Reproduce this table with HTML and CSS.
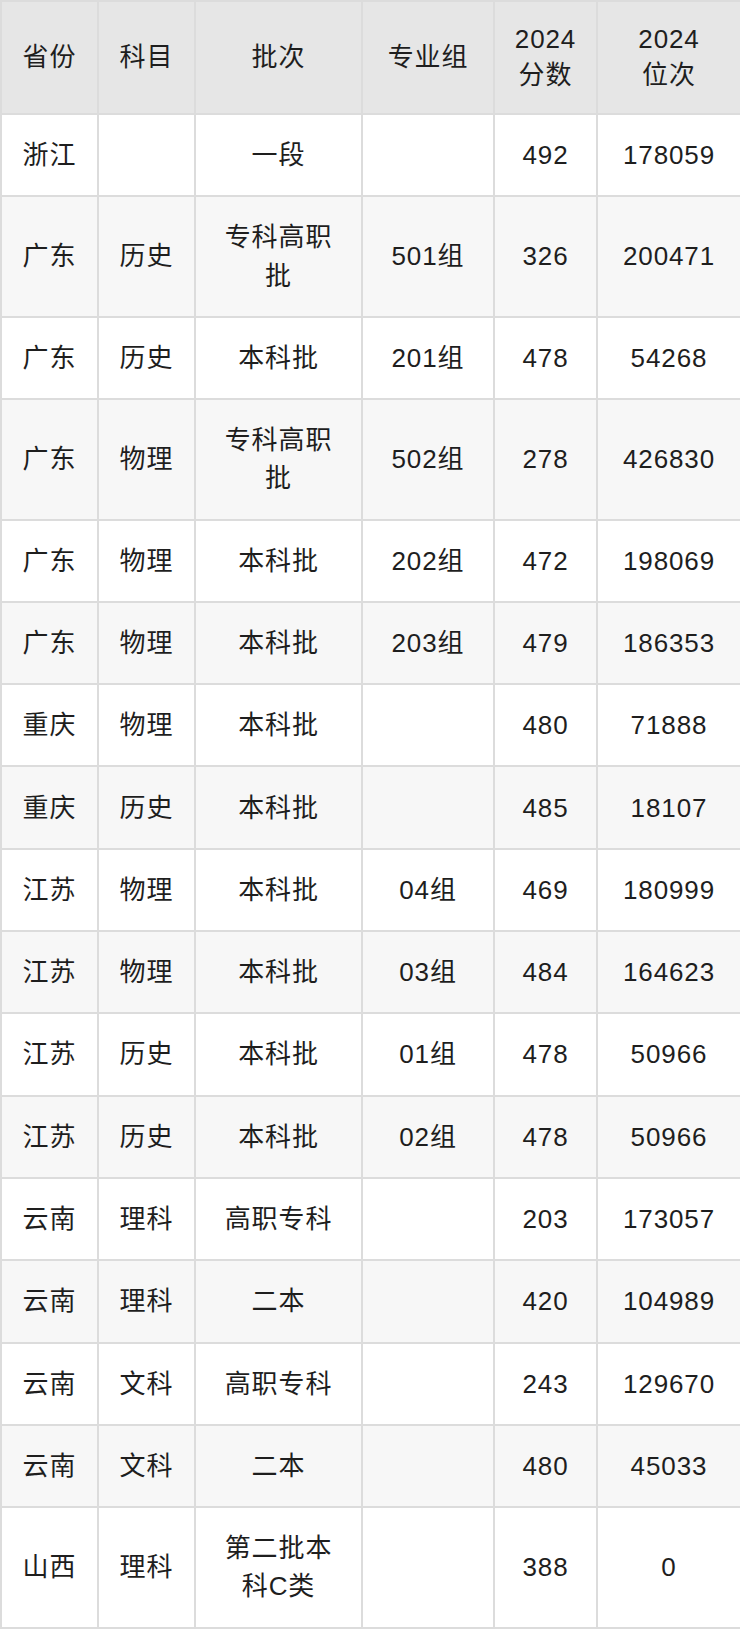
FILE: index.html
```html
<!DOCTYPE html>
<html lang="zh-CN">
<head>
<meta charset="utf-8">
<link rel="stylesheet" href="styles.css">
<title>分数线</title>
</head>
<body>
<table class="score-table">
  <colgroup>
    <col class="c1"><col class="c2"><col class="c3"><col class="c4"><col class="c5"><col class="c6">
  </colgroup>
  <thead>
    <tr><th>省份</th><th>科目</th><th>批次</th><th>专业组</th><th>2024<br>分数</th><th>2024<br>位次</th></tr>
  </thead>
  <tbody>
    <tr><td>浙江</td><td></td><td>一段</td><td></td><td>492</td><td>178059</td></tr>
    <tr><td>广东</td><td>历史</td><td>专科高职<br>批</td><td>501组</td><td>326</td><td>200471</td></tr>
    <tr><td>广东</td><td>历史</td><td>本科批</td><td>201组</td><td>478</td><td>54268</td></tr>
    <tr><td>广东</td><td>物理</td><td>专科高职<br>批</td><td>502组</td><td>278</td><td>426830</td></tr>
    <tr><td>广东</td><td>物理</td><td>本科批</td><td>202组</td><td>472</td><td>198069</td></tr>
    <tr><td>广东</td><td>物理</td><td>本科批</td><td>203组</td><td>479</td><td>186353</td></tr>
    <tr><td>重庆</td><td>物理</td><td>本科批</td><td></td><td>480</td><td>71888</td></tr>
    <tr><td>重庆</td><td>历史</td><td>本科批</td><td></td><td>485</td><td>18107</td></tr>
    <tr><td>江苏</td><td>物理</td><td>本科批</td><td>04组</td><td>469</td><td>180999</td></tr>
    <tr><td>江苏</td><td>物理</td><td>本科批</td><td>03组</td><td>484</td><td>164623</td></tr>
    <tr><td>江苏</td><td>历史</td><td>本科批</td><td>01组</td><td>478</td><td>50966</td></tr>
    <tr><td>江苏</td><td>历史</td><td>本科批</td><td>02组</td><td>478</td><td>50966</td></tr>
    <tr><td>云南</td><td>理科</td><td>高职专科</td><td></td><td>203</td><td>173057</td></tr>
    <tr><td>云南</td><td>理科</td><td>二本</td><td></td><td>420</td><td>104989</td></tr>
    <tr><td>云南</td><td>文科</td><td>高职专科</td><td></td><td>243</td><td>129670</td></tr>
    <tr><td>云南</td><td>文科</td><td>二本</td><td></td><td>480</td><td>45033</td></tr>
    <tr><td>山西</td><td>理科</td><td>第二批本<br>科C类</td><td></td><td>388</td><td>0</td></tr>
  </tbody>
</table>
</body>
</html>
```

FILE: styles.css
```css
html, body {
  margin: 0;
  padding: 0;
  background: #ffffff;
}

.score-table {
  width: 740px;
  table-layout: fixed;
  border-collapse: separate;
  border-spacing: 0;
  border-top: 2px solid #dcdcdc;
  border-left: 2px solid #dcdcdc;
  font-family: "Liberation Sans", "Noto Sans CJK SC", sans-serif;
  font-size: 26px;
  letter-spacing: 0.9px;
  color: #1e1e1e;
}

.c1 { width: 97px; }
.c2 { width: 97px; }
.c3 { width: 167px; }
.c4 { width: 132px; }
.c5 { width: 103px; }
.c6 { width: 144px; }

.score-table th,
.score-table td {
  border-right: 2px solid #dcdcdc;
  border-bottom: 2px solid #dcdcdc;
  text-align: center;
  vertical-align: middle;
  padding: 21.05px 4px;
  line-height: 38.2px;
  font-weight: normal;
}

.score-table th {
  background: #e6e6e6;
  padding: 19px 4px 20px;
  line-height: 36px;
}

.score-table tbody tr:nth-child(even) td {
  background: #f7f7f7;
}
```
